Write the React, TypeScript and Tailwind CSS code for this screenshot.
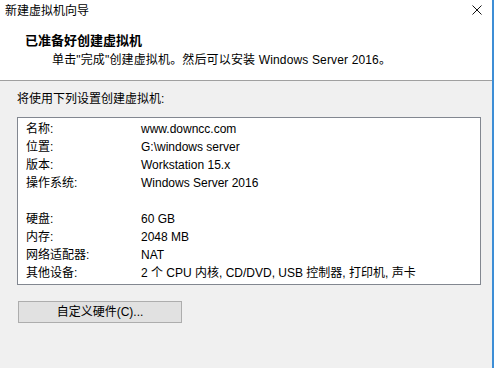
import * as React from 'react';

const rows: [string, string][] = [
    ['名称:', 'www.downcc.com'],
    ['位置:', 'G:\\windows server'],
    ['版本:', 'Workstation 15.x'],
    ['操作系统:', 'Windows Server 2016'],
    ['', ''],
    ['硬盘:', '60 GB'],
    ['内存:', '2048 MB'],
    ['网络适配器:', 'NAT'],
    ['其他设备:', '2 个 CPU 内核, CD/DVD, USB 控制器, 打印机, 声卡'],
];

const font = "font-['Liberation_Sans','Noto_Sans_CJK_SC',sans-serif]";

const App: React.FunctionComponent = () => {
    return (
        <div className={`w-[494px] h-[368px] flex bg-[#f0f0f0] text-[12px] text-black ${font}`}>
            <div className="flex-1 flex flex-col">
                {/* title + header */}
                <div className="h-[81px] bg-white border-b border-[#a0a0a0]">
                    <div className="h-[22px] flex items-center justify-between pl-[5px] pr-[10px]">
                        <span className="leading-[22px]">新建虚拟机向导</span>
                        <svg width="10" height="10" viewBox="0 0 10 10" className="mt-[-2px]">
                            <path d="M0.5 0.5 L9.5 9.5 M9.5 0.5 L0.5 9.5" stroke="#111" strokeWidth="1" fill="none" />
                        </svg>
                    </div>
                    <div className="pl-[25px] mt-[10px] leading-[18px] font-bold text-[13px]">已准备好创建虚拟机</div>
                    <div className="pl-[52px] mt-[1px] leading-[18px] tracking-[0.15px]">
                        单击"完成"创建虚拟机。然后可以安装 Windows Server 2016。
                    </div>
                </div>

                <div className="pl-[17px] pt-[9px]">
                    <div className="leading-[18px]">将使用下列设置创建虚拟机:</div>
                    <div className="mt-[9px] w-[464px] bg-white border border-[#828790] py-[2px] pl-[8px]">
                        {rows.map(([label, value], i) => (
                            <div key={i} className="flex h-[18px] leading-[18px]">
                                <span className="w-[115px] shrink-0">{label}</span>
                                <span>{value}</span>
                            </div>
                        ))}
                    </div>
                    <button className="mt-[16px] ml-[1px] w-[164px] h-[22px] bg-[#e1e1e1] border border-[#adadad] text-[12px] leading-[20px]">
                        自定义硬件(C)...
                    </button>
                </div>
            </div>
            <div className="w-[2px] bg-[#3d8ed6]" />
        </div>
    );
};

export default App;
